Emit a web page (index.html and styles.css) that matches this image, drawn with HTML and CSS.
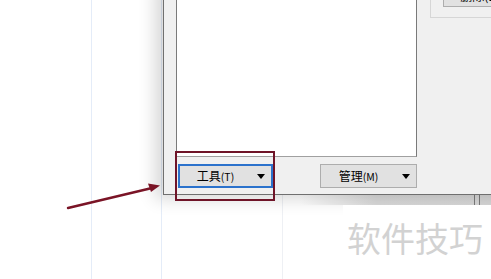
FILE: index.html
```html
<!DOCTYPE html>
<html lang="zh-CN">
<head>
  <meta charset="UTF-8">
  <meta name="viewport" content="width=device-width, initial-scale=1.0">
  <title>工具菜单</title>
  <link rel="stylesheet" href="styles.css">
</head>
<body>
  <div class="desktop">
    <div class="back-bar"></div>

    <div class="dialog">
      <div class="main">
        <div class="listbox"></div>
        <div class="button-row">
          <button class="drop-button focused">
            <span class="label">工具<small>(T)</small></span>
            <span class="caret"></span>
          </button>
          <button class="drop-button">
            <span class="label">管理<small>(M)</small></span>
            <span class="caret"></span>
          </button>
        </div>
      </div>
      <div class="side">
        <div class="group">
          <button class="push-button">删除(D)</button>
        </div>
      </div>
    </div>

    <!-- highlight drawn over the screenshot -->
    <div class="highlight"></div>
    <svg class="pointer" width="100" height="30" viewBox="0 0 100 30">
      <line x1="2" y1="26" x2="86" y2="6" stroke="#7a1426" stroke-width="2.4" stroke-linecap="round"/>
      <polygon points="94,3.5 82,1.5 85,10" fill="#7a1426"/>
    </svg>

    <div class="watermark">软件技巧</div>
  </div>
</body>
</html>
```

FILE: styles.css
```css
body {
  margin: 0;
  font-family: "Noto Sans CJK SC", "Liberation Sans", sans-serif;
  background-color: #ffffff;
}

.desktop {
  position: relative;
  width: 491px;
  height: 279px;
  overflow: hidden;
  background-color: #ffffff;
  background-image:
    linear-gradient(#e4ecf8, #e4ecf8),
    linear-gradient(#e4ecf8, #e4ecf8),
    linear-gradient(#eef0f4, #eef0f4),
    linear-gradient(#e6e6e6, #e6e6e6);
  background-size: 1px 100%, 1px 100%, 1px 100%, 1px 100%;
  background-position: 91px 0, 161px 0, 282px 0, 430px 0;
  background-repeat: no-repeat;
}

/* window behind the dialog, peeking out below it */
.back-bar {
  position: absolute;
  left: 300px;
  right: 0;
  top: 190px;
  height: 15px;
  background: linear-gradient(90deg, rgba(220, 220, 220, 0), #dadada 40%, #d8d8d8);
}

.back-bar::after {
  content: "";
  position: absolute;
  left: 174px;
  top: 0;
  width: 4px;
  height: 100%;
  border-left: 1px solid #7c7c7c;
  border-right: 1px solid #7c7c7c;
}

.dialog {
  position: absolute;
  left: 163px;
  top: -20px;
  width: 360px;
  height: 215px;
  box-sizing: border-box;
  display: flex;
  padding: 0 0 6px 12px;
  background-color: #f0f0f0;
  border: 1px solid #6f6f6f;
  box-shadow: -8px 4px 16px rgba(0, 0, 0, 0.16);
}

.main {
  width: 241px;
  display: flex;
  flex-direction: column;
}

.listbox {
  flex: 1;
  background-color: #ffffff;
  border: 1px solid #7a7a7a;
  border-bottom-color: #a0a0a0;
  border-top: none;
}

.button-row {
  display: flex;
  justify-content: space-between;
  margin-top: 7px;
}

.drop-button {
  display: flex;
  align-items: center;
  height: 24px;
  width: 97px;
  padding: 0;
  box-sizing: border-box;
  background-color: #e1e1e1;
  border: 1px solid #adadad;
  font-family: inherit;
  font-size: 12px;
  color: #000000;
}

.drop-button.focused {
  width: 95px;
  margin-left: 2px;
  border: 2px solid #2b72cc;
}

.drop-button .label {
  flex: 1;
  text-align: center;
  line-height: 20px;
}

.drop-button small {
  font-size: 10.5px;
}

.caret {
  width: 20px;
  height: 5px;
  display: flex;
  justify-content: center;
}

.caret::before {
  content: "";
  border-left: 4px solid transparent;
  border-right: 4px solid transparent;
  border-top: 5px solid #000000;
}

.side {
  flex: 1;
  margin-left: 13px;
}

.group {
  height: 37px;
  box-sizing: border-box;
  display: flex;
  align-items: flex-end;
  padding: 0 0 10px 12px;
  border-left: 1px solid #d6d6d6;
  border-bottom: 1px solid #d6d6d6;
}

.push-button {
  height: 23px;
  width: 75px;
  padding: 0;
  background-color: #e1e1e1;
  border: 1px solid #adadad;
  font-family: inherit;
  font-size: 12px;
  line-height: 21px;
  color: #000000;
}

.highlight {
  position: absolute;
  left: 175px;
  top: 151px;
  width: 100px;
  height: 50px;
  box-sizing: border-box;
  border: 2px solid #6f1428;
}

.pointer {
  position: absolute;
  left: 66px;
  top: 182px;
}

.watermark {
  position: absolute;
  left: 343px;
  top: 205px;
  right: 0;
  bottom: 0;
  padding: 13px 0 0 4px;
  background-color: #ffffff;
  font-size: 34px;
  line-height: 40px;
  color: #d2d2d2;
  white-space: nowrap;
}
```
